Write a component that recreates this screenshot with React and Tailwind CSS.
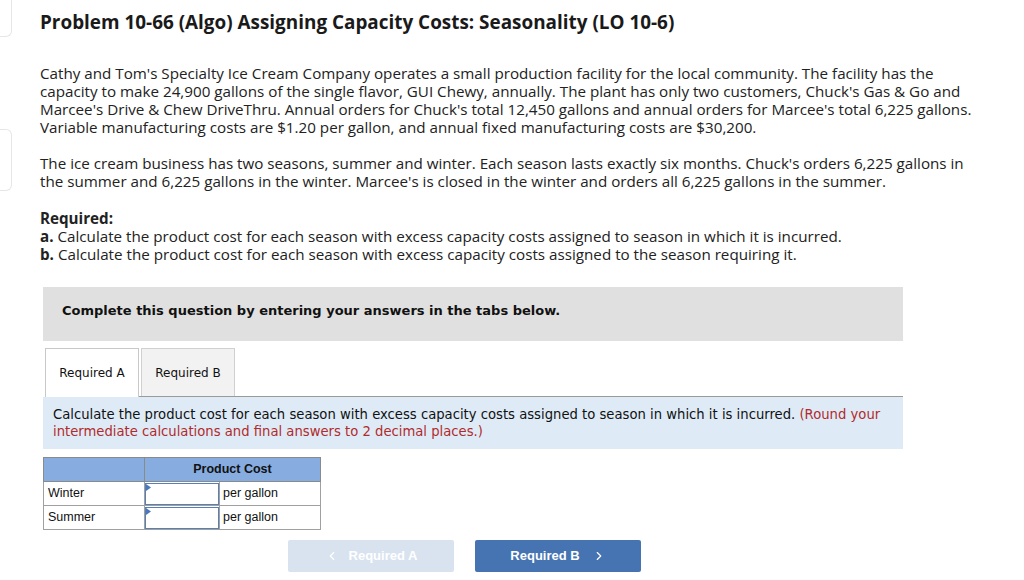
import React from "react";
import { ChevronLeft, ChevronRight } from "lucide-react";

const body = { fontFamily: '"Open Sans", "Liberation Sans", sans-serif' };
const verd = { fontFamily: '"DejaVu Sans", Verdana, sans-serif' };
const arial = { fontFamily: '"Liberation Sans", Arial, sans-serif' };

export default function App() {
  return (
    <div className="w-[1024px] h-[580px] bg-white overflow-hidden flex text-[#222]">
      <div className="w-[12px] shrink-0 flex flex-col">
        <div className="h-[38px] border-r border-b border-[#e6e6e6] rounded-br-[6px] -mt-px"></div>
        <div className="h-[62px] mt-[92px] border-r border-t border-b border-[#e6e6e6] rounded-r-[6px]"></div>
      </div>
      <div className="ml-[28px] w-[940px] flex flex-col items-start" style={body}>
        <h1 className="mt-[10px] text-[18.9px] leading-[24px] font-bold text-[#1a1a1a]">
          Problem 10-66 (Algo) Assigning Capacity Costs: Seasonality (LO 10-6)
        </h1>
        <p className="mt-[30px] w-[936px] text-[15.2px] leading-[18px]">
          Cathy and Tom's Specialty Ice Cream Company operates a small production facility for the local community. The facility has the capacity to make 24,900 gallons of the single flavor, GUI Chewy, annually. The plant has only two customers, Chuck's Gas &amp; Go and Marcee's Drive &amp; Chew DriveThru. Annual orders for Chuck's total 12,450 gallons and annual orders for Marcee's total 6,225 gallons. Variable manufacturing costs are $1.20 per gallon, and annual fixed manufacturing costs are $30,200.
        </p>
        <p className="mt-[18px] w-[936px] text-[15.2px] leading-[18px]">
          The ice cream business has two seasons, summer and winter. Each season lasts exactly six months. Chuck's orders 6,225 gallons in the summer and 6,225 gallons in the winter. Marcee's is closed in the winter and orders all 6,225 gallons in the summer.
        </p>
        <div className="mt-[19px] text-[15.2px] leading-[18px]">
          <div className="font-bold">Required:</div>
          <div><span className="font-bold">a.</span> Calculate the product cost for each season with excess capacity costs assigned to season in which it is incurred.</div>
          <div><span className="font-bold">b.</span> Calculate the product cost for each season with excess capacity costs assigned to the season requiring it.</div>
        </div>

        <div className="mt-[24px] ml-[3px] w-[860px] h-[54px] bg-[#e0e0e0] flex items-center pl-[19px] pb-[6px]" style={verd}>
          <span className="text-[13px] font-bold text-[#111]">Complete this question by entering your answers in the tabs below.</span>
        </div>

        <div className="mt-[7px] ml-[5px] w-[858px] flex items-end gap-[2px] border-b border-[#9a9a9a]" style={verd}>
          <div className="w-[94px] h-[49px] -mb-px bg-white border border-b-0 border-[#c8c8c8] flex items-center justify-center text-[12px] text-[#111]">
            Required A
          </div>
          <div className="w-[94px] h-[48px] bg-[#f2f2f2] border border-b-0 border-[#d0d0d0] flex items-center justify-center text-[12px] text-[#111]">
            Required B
          </div>
        </div>

        <div className="ml-[3px] w-[860px] h-[52px] bg-[#deebf7] px-[10px] pt-[9px] text-[13.2px] leading-[17px] text-[#111]" style={verd}>
          Calculate the product cost for each season with excess capacity costs assigned to season in which it is incurred.{" "}
          <span className="text-[#b22a2a]">(Round your intermediate calculations and final answers to 2 decimal places.)</span>
        </div>

        <table className="mt-[8px] ml-[3px] w-[277px] table-fixed border-collapse text-[12.5px] text-[#111]" style={arial}>
          <colgroup>
            <col className="w-[101px]" />
            <col className="w-[75px]" />
            <col className="w-[101px]" />
          </colgroup>
          <tbody>
            <tr className="h-[24px] bg-[#86ace0]">
              <td className="border border-[#8a8a8a]"></td>
              <td colSpan={2} className="border border-[#8a8a8a] text-center font-bold">Product Cost</td>
            </tr>
            {["Winter", "Summer"].map((r) => (
              <tr key={r} className="h-[24px]">
                <td className="border border-[#a0a0a0] pl-[4px]">{r}</td>
                <td className="border border-[#a0a0a0] p-0">
                  <div className="relative h-[22px] border border-[#5b7fb0] bg-white">
                    <svg className="absolute left-0 top-0" width="5" height="7" viewBox="0 0 5 7">
                      <path d="M0 0 L5 3.5 L0 7 Z" fill="#4a78c0" />
                    </svg>
                  </div>
                </td>
                <td className="border border-[#a0a0a0] pl-[3px]">per gallon</td>
              </tr>
            ))}
          </tbody>
        </table>

        <div className="mt-[10px] ml-[248px] flex gap-[21px]" style={arial}>
          <div className="w-[166px] h-[32px] bg-[#d9e3f0] rounded-[2px] flex items-center justify-center gap-[10px] text-white text-[13px] font-bold">
            <ChevronLeft size={14} strokeWidth={2} />
            <span>Required A</span>
          </div>
          <div className="w-[166px] h-[32px] bg-[#4673b1] rounded-[2px] flex items-center justify-center gap-[12px] text-white text-[13px] font-bold">
            <span>Required B</span>
            <ChevronRight size={14} strokeWidth={2} />
          </div>
        </div>
      </div>
    </div>
  );
}
